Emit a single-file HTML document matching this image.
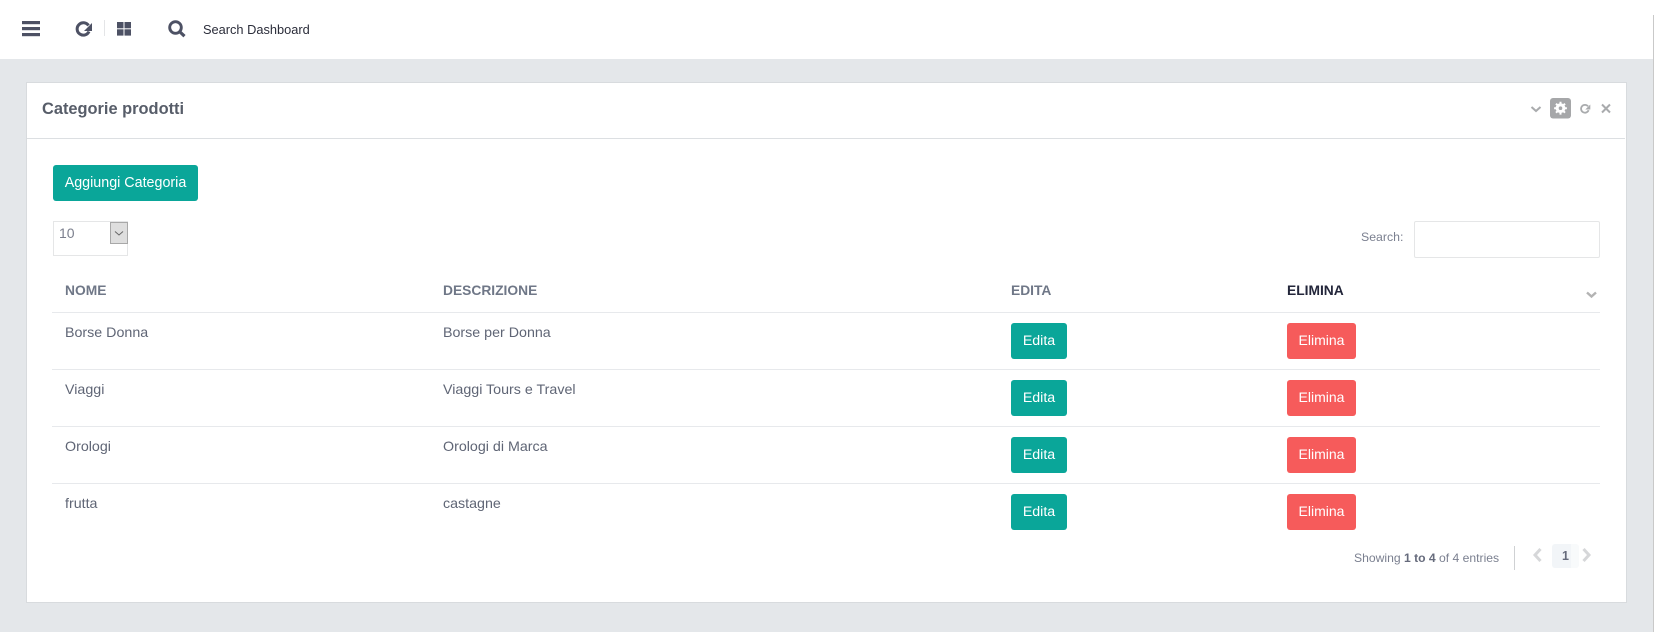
<!DOCTYPE html>
<html lang="it"><head><meta charset="utf-8"><title>Categorie prodotti</title>
<style>
html,body{margin:0;padding:0;width:1655px;height:632px;overflow:hidden;background:#fff;font-family:"Liberation Sans",Arial,sans-serif}
.a{position:absolute;white-space:nowrap}
#bg{left:0;top:59px;width:1653px;height:573px;background:#e4e7ea}
#sb{left:1653px;top:15px;width:1px;height:617px;background:#c9c9c9}
#card{left:26px;top:82px;width:1599px;height:519px;background:#fff;border:1px solid #d8dbde}
.line{left:52px;width:1548px;height:1px;background:#e7e9ec}
.btn{height:36px;line-height:36px;text-align:center;color:#fff;font-size:14.2px;border-radius:3px}
.g{background:#0aa699}.r{background:#f65b5b}
.r{font-size:14px;line-height:35px}
.th{top:282px;font-size:13.8px;line-height:17px;font-weight:bold;color:#6f7787}
.td{font-size:14.25px;line-height:18px;color:#5f6575}
svg{position:absolute;overflow:visible}
</style></head><body>
<div class="a" id="bg"></div><div class="a" id="sb"></div>

<svg style="left:0;top:0" width="300" height="59">
<g fill="#4d5164">
<rect x="22" y="21" width="18" height="3.2"/><rect x="22" y="27" width="18" height="3.2"/><rect x="22" y="33" width="18" height="3.2"/>
<rect x="117" y="22" width="6.5" height="6.3"/><rect x="124.500" y="22" width="6.5" height="6.3"/><rect x="117" y="29.300" width="6.5" height="6.3"/><rect x="124.500" y="29.300" width="6.5" height="6.3"/>
<path d="M92 23v8h-8z"/>
</g>
<path d="M88.500 25.500A6.200 6.200 0 1 0 89 31.500" fill="none" stroke="#4d5164" stroke-width="3"/>
<rect x="104" y="20" width="1" height="16" fill="#e4e5e7"/>
<circle cx="175.500" cy="27.500" r="5.800" fill="none" stroke="#4d5164" stroke-width="2.900"/>
<path d="M180 32l4.500 4.200" stroke="#4d5164" stroke-width="3.200" fill="none"/>
</svg>
<div class="a" style="left:203px;top:21px;font-size:12.800px;line-height:18px;color:#2b2d3a">Search Dashboard</div>

<div class="a" id="card"></div>
<div class="a" style="left:42px;top:99px;font-size:16.400px;line-height:21px;font-weight:bold;color:#575d69">Categorie prodotti</div>
<div class="a" style="left:27px;top:138px;width:1598px;height:1px;background:#dcdfe2"></div>

<svg style="left:1520px;top:90px" width="100" height="36">
<path d="M11.500 17l4.500 4 4.500-4" fill="none" stroke="#a9abad" stroke-width="2"/>
<rect x="30" y="8" width="21" height="20.500" rx="3" fill="#a6a7a9"/>
<circle cx="40.500" cy="18.200" r="4.900" fill="#fff"/>
<circle cx="40.500" cy="18.200" r="1.800" fill="#a6a7a9"/>
<g stroke="#fff" stroke-width="2"><path d="M40.500 11.800v2M40.500 22.600v2M34.100 18.200h2M44.900 18.200h2M36 13.700l1.400 1.400M43.600 21.300l1.400 1.400M45 13.700l-1.400 1.400M37.400 21.300l-1.400 1.400"/></g>
<path d="M68 16.300A3.900 3.900 0 1 0 68.600 20.200" fill="none" stroke="#a9abad" stroke-width="1.800"/>
<path d="M70.300 14.500v5h-5z" fill="#a9abad"/>
<path d="M82 14.500l8 8M90 14.500l-8 8" stroke="#a9abad" stroke-width="2" fill="none"/>
</svg>

<div class="a btn g" style="left:53px;top:165px;width:145px;line-height:36px;font-size:14.3px">Aggiungi Categoria</div>

<div class="a" style="left:53px;top:221px;width:73px;height:33px;border:1px solid #e5e6e7;background:#fff"></div>
<div class="a" style="left:59px;top:224px;font-size:14px;line-height:18px;color:#7b7f8d">10</div>
<div class="a" style="left:110px;top:222px;width:16px;height:20px;background:#dedede;border:1px solid #a8a8a8"></div>
<svg style="left:110px;top:222px" width="18" height="22"><path d="M5 9.500l4 3.500 4-3.500" fill="none" stroke="#666" stroke-width="1"/></svg>

<div class="a" style="left:1361px;top:229px;font-size:12.300px;line-height:16px;color:#7b8090">Search:</div>
<div class="a" style="left:1414px;top:221px;width:184px;height:35px;border:1px solid #e5e6e7;border-radius:2px;background:#fff"></div>

<div class="a th" style="left:65px">NOME</div>
<div class="a th" style="left:443px">DESCRIZIONE</div>
<div class="a th" style="left:1011px">EDITA</div>
<div class="a th" style="left:1287px;color:#23263a">ELIMINA</div>
<svg style="left:1581px;top:285px" width="20" height="20"><path d="M6 7.500l4.500 4 4.500-4" fill="none" stroke="#b3b3b3" stroke-width="2.400"/></svg>

<div class="a line" style="top:312px"></div>
<div class="a line" style="top:369px"></div>
<div class="a line" style="top:426px"></div>
<div class="a line" style="top:483px"></div>

<div class="a td" style="left:65px;top:324px">Borse Donna</div>
<div class="a td" style="left:443px;top:324px">Borse per Donna</div>
<div class="a btn g" style="left:1011px;top:323px;width:56px">Edita</div>
<div class="a btn r" style="left:1287px;top:323px;width:69px">Elimina</div>

<div class="a td" style="left:65px;top:381px">Viaggi</div>
<div class="a td" style="left:443px;top:381px">Viaggi Tours e Travel</div>
<div class="a btn g" style="left:1011px;top:380px;width:56px">Edita</div>
<div class="a btn r" style="left:1287px;top:380px;width:69px">Elimina</div>

<div class="a td" style="left:65px;top:438px">Orologi</div>
<div class="a td" style="left:443px;top:438px">Orologi di Marca</div>
<div class="a btn g" style="left:1011px;top:437px;width:56px">Edita</div>
<div class="a btn r" style="left:1287px;top:437px;width:69px">Elimina</div>

<div class="a td" style="left:65px;top:495px">frutta</div>
<div class="a td" style="left:443px;top:495px">castagne</div>
<div class="a btn g" style="left:1011px;top:494px;width:56px">Edita</div>
<div class="a btn r" style="left:1287px;top:494px;width:69px">Elimina</div>

<div class="a" style="left:1354px;top:550px;font-size:12.150px;line-height:16px;color:#7b8090">Showing <b style="color:#666b7c">1 to 4</b> of 4 entries</div>
<div class="a" style="left:1514px;top:546px;width:1px;height:24px;background:#cfd1d3"></div>
<div class="a" style="left:1552px;top:544px;width:19px;height:24px;background:#f2f5f8;border-radius:3px 0 0 3px"></div>
<div class="a" style="left:1571px;top:544px;width:8px;height:24px;background:#f8fafb;border-radius:0 3px 3px 0"></div>
<div class="a" style="left:1562px;top:548px;font-size:12.500px;line-height:17px;font-weight:bold;color:#666b7c">1</div>
<svg style="left:1525px;top:543px" width="75" height="24">
<path d="M15.500 6l-5.500 6 5.500 6" fill="none" stroke="#d6d7d9" stroke-width="3"/>
<path d="M58.500 6l5.500 6-5.500 6" fill="none" stroke="#d6d7d9" stroke-width="3"/>
</svg>
</body></html>
